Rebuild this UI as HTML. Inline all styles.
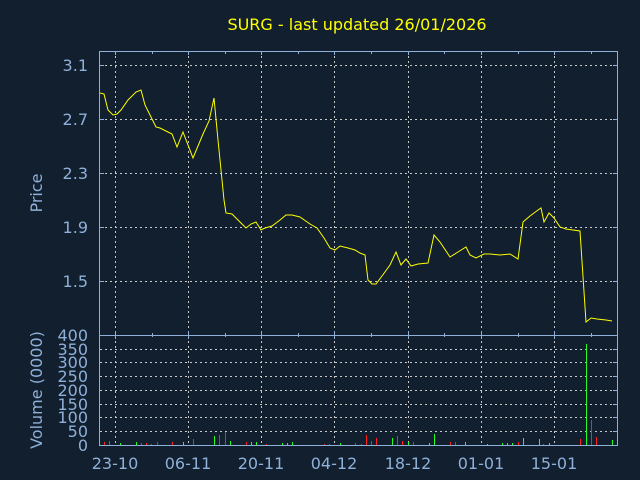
<!DOCTYPE html>
<html><head><meta charset="utf-8"><style>
html,body{margin:0;padding:0;background:#111f2f;}
svg{display:block;font-family:"DejaVu Sans","Liberation Sans",sans-serif;}
</style></head><body>
<svg width="640" height="480" viewBox="0 0 640 480">
<rect width="640" height="480" fill="#111f2f"/>
<text x="357" y="30" fill="#ffff00" font-size="16" text-anchor="middle">SURG - last updated 26/01/2026</text>
<g stroke="#c8c8c8" stroke-dasharray="2,3" stroke-width="1">
<line x1="100" y1="65.5" x2="617" y2="65.5"/><line x1="100" y1="119.5" x2="617" y2="119.5"/>
<line x1="100" y1="173.5" x2="617" y2="173.5"/><line x1="100" y1="227.5" x2="617" y2="227.5"/>
<line x1="100" y1="281.5" x2="617" y2="281.5"/>
<line x1="100" y1="349.5" x2="617" y2="349.5"/><line x1="100" y1="362.5" x2="617" y2="362.5"/>
<line x1="100" y1="376.5" x2="617" y2="376.5"/><line x1="100" y1="390.5" x2="617" y2="390.5"/>
<line x1="100" y1="404.5" x2="617" y2="404.5"/><line x1="100" y1="417.5" x2="617" y2="417.5"/>
<line x1="100" y1="431.5" x2="617" y2="431.5"/>
<line x1="115.5" y1="51" x2="115.5" y2="445"/><line x1="188.5" y1="51" x2="188.5" y2="445"/>
<line x1="261.5" y1="51" x2="261.5" y2="445"/><line x1="334.5" y1="51" x2="334.5" y2="445"/>
<line x1="408.5" y1="51" x2="408.5" y2="445"/><line x1="481.5" y1="51" x2="481.5" y2="445"/>
<line x1="554.5" y1="51" x2="554.5" y2="445"/>
</g>
<g stroke="#8fb0d8" stroke-width="1" fill="none">
<rect x="99.5" y="51.5" width="518" height="284"/>
<rect x="99.5" y="335.5" width="518" height="110"/>
<path d="M115.5 51v4M152.5 51v3M188.5 51v4M225.5 51v3M261.5 51v4M298.5 51v3M334.5 51v4M371.5 51v3M408.5 51v4M444.5 51v3M481.5 51v4M518.5 51v3M554.5 51v4M591.5 51v3
M115.5 331v8M152.5 333v4M188.5 331v8M225.5 333v4M261.5 331v8M298.5 333v4M334.5 331v8M371.5 333v4M408.5 331v8M444.5 333v4M481.5 331v8M518.5 333v4M554.5 331v8M591.5 333v4
M100 65.5h4M613 65.5h4M100 119.5h4M613 119.5h4M100 173.5h4M613 173.5h4M100 227.5h4M613 227.5h4M100 281.5h4M613 281.5h4
M613 349.5h4M613 362.5h4M613 376.5h4M613 390.5h4M613 404.5h4M613 417.5h4M613 431.5h4"/>
</g>
<polyline fill="none" stroke="#ffff00" stroke-width="1" points="100,93 104,94 108,110 113,115 117,114 121,110 128,100 136,92 141,90 145,105 150,115 156,127 160,128 172,134 177,147 183,132 193,158 203,134 209,121 214,98 218,140 221,170 224,200 226,213 232,214 240,222 246,228 251,224 256,222 261,230 265,228 272,226 280,220 286,215 292,215 300,217 310,224 317,228 324,238 330,248 335,250 340,246 348,248 355,250 360,253 365,255 368,280 372,284 376,284 382,276 390,265 396,252 401,265 406,259 411,266 418,264 428,263 434,235 440,242 450,257 458,252 466,247 470,255 476,258 484,254 490,254 500,255 510,254 518,259 523,222 530,216 538,210 541,208 544,222 549,213 554,218 560,227 566,229 573,230 580,231 586,322 591,318 597,319 606,320 612,321"/>
<g stroke-width="1">
<path stroke="#ff2020" d="M104.5 445v-3M109.5 445v-4M141.5 445v-2M146.5 445v-2M151.5 445v-1M157.5 445v-3M172.5 445v-3M193.5 445v-6M219.5 445v-10M225.5 445v-13M246.5 445v-3M266.5 445v-1M324.5 445v-1M329.5 445v-1M355.5 445v-2M361.5 445v-1M366.5 445v-10M371.5 445v-4M376.5 445v-7M397.5 445v-9M402.5 445v-4M413.5 445v-3M450.5 445v-3M455.5 445v-3M518.5 445v-3M543.5 445v-1M580.5 445v-6M591.5 445v-25M596.5 445v-8"/>
<path stroke="#20ff20" d="M120.5 445v-2M136.5 445v-3M183.5 445v-3M214.5 445v-9M230.5 445v-4M251.5 445v-3M256.5 445v-3M282.5 445v-2M287.5 445v-2M292.5 445v-3M340.5 445v-2M392.5 445v-7M408.5 445v-3M429.5 445v-2M434.5 445v-11M465.5 445v-3M487.5 445v-1M502.5 445v-2M507.5 445v-2M512.5 445v-2M523.5 445v-7M539.5 445v-6M549.5 445v-2M586.5 445v-101M612.5 445v-5"/>
</g>
<g fill="#8fb0d8" font-size="16" text-anchor="end">
<text x="88" y="71">3.1</text><text x="88" y="125">2.7</text><text x="88" y="179">2.3</text>
<text x="88" y="233">1.9</text><text x="88" y="287">1.5</text><text x="88" y="341">400</text>
<text x="88" y="355">350</text><text x="88" y="368">300</text><text x="88" y="382">250</text>
<text x="88" y="396">200</text><text x="88" y="410">150</text><text x="88" y="423">100</text>
<text x="88" y="437">50</text><text x="88" y="451">0</text>
</g>
<g fill="#8fb0d8" font-size="16" text-anchor="middle">
<text x="115" y="469">23-10</text><text x="188" y="469">06-11</text><text x="261" y="469">20-11</text>
<text x="334" y="469">04-12</text><text x="408" y="469">18-12</text><text x="481" y="469">01-01</text>
<text x="554" y="469">15-01</text>
<text transform="translate(42,193) rotate(-90)">Price</text>
<text transform="translate(42,390) rotate(-90)">Volume (0000)</text>
</g>
</svg>
</body></html>
